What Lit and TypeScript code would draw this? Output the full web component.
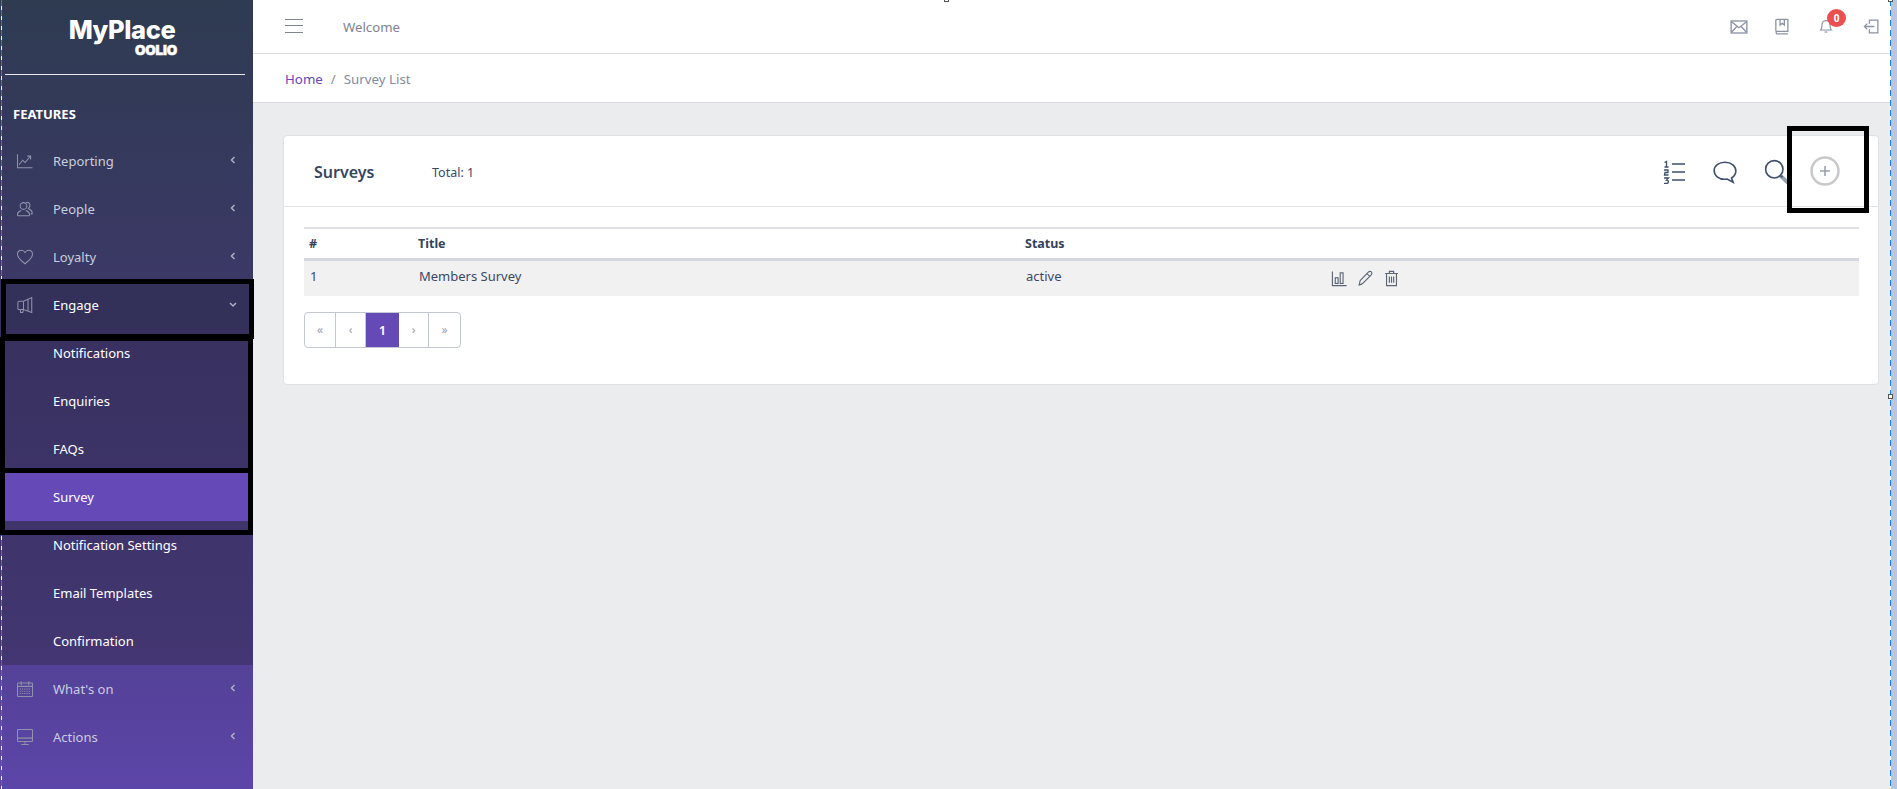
import { LitElement, html, css, svg } from "lit";
import { customElement } from "lit/decorators.js";

const stroke = (body: unknown, size = 20, vb = "0 0 24 24", w = 1.2) => html`<svg class="ico" width=${size} height=${size} viewBox=${vb} fill="none" stroke="currentColor" stroke-width=${w}>${body}</svg>`;

const icons = {
  chart: svg`<path d="M2 3v18h20"/><path d="M4 17l5-6 3 3 7-8"/><path d="M15 5.500h4.500V10"/>`,
  people: svg`<circle cx="10" cy="8" r="4.500"/><path d="M2 21v-2c0-3 3-4 5-5M18 21v-2c0-3-3-4-5-5M2 21h16"/><path d="M13 3.500c3-1.500 6 .5 5.500 4-.2 2-1 3-2 4 2 1 5 2 5 5v2h-2"/>`,
  heart: svg`<path d="M12 21C6 16 2 13 2 8.500 2 5 4.500 3 7 3c2.200 0 4 1.200 5 3 1-1.800 2.800-3 5-3 2.500 0 5 2 5 5.500C22 13 18 16 12 21z"/>`,
  mega: svg`<path d="M21 2v20l-11-4H4a1.500 1.500 0 0 1-1.500-1.500v-8A1.500 1.500 0 0 1 4 7h6z"/><path d="M10 7v11M16 4v16M6 18v4h3l1-4"/>`,
  cal: svg`<rect x="2" y="4" width="20" height="18" rx="1"/><path d="M7 1.500v5M17 1.500v5M2 8.500h20"/><path stroke-dasharray="1.500 1.500" d="M5 12h14M5 15h14M5 18h14"/>`,
  monitor: svg`<rect x="2" y="2" width="20" height="16" rx="1"/><path d="M2 13.500h20M12 18v3M7 22h10"/>`,
};

const parents = [
  ["Reporting", icons.chart],
  ["People", icons.people],
  ["Loyalty", icons.heart],
] as const;
const subs = ["Notifications", "Enquiries", "FAQs", "Survey", "Notification Settings", "Email Templates", "Confirmation"];
const tail = [
  ["What's on", icons.cal],
  ["Actions", icons.monitor],
] as const;

@customElement("app-root")
export class AppRoot extends LitElement {
  static styles = css`
    :host { display: block; width: 1897px; height: 789px; position: relative; overflow: hidden; background: #ebecee;
      font-family: "Noto Sans", "Open Sans", sans-serif; font-size: 13px; color: #3b4a63; }
    * { box-sizing: border-box; }
    .app { display: flex; height: 789px; }
    .side { width: 253px; flex: none; color: #fff; background: linear-gradient(180deg, #2e3b51 0%, #3d3869 40%, #5c45a8 100%); }
    .logo { height: 75px; margin: 0 8px 0 5px; border-bottom: 1px solid #e8e8ee; display: flex; flex-direction: column; align-items: center; padding-top: 15px; }
    .logo b { font: 800 25.500px/29px Inter, "Liberation Sans", sans-serif; letter-spacing: -0.4px; padding-right: 6px; }
    .logo i { font: 900 13.500px/12px Inter, "Liberation Sans", sans-serif; font-style: normal; letter-spacing: -0.2px; align-self: flex-end; margin: 0 68px 0 0; -webkit-text-stroke: 0.5px #fff; }
    .features { font-weight: 700; font-size: 13px; line-height: 18px; margin: 30px 0 14px 13px; height: 18px; }
    .item { display: flex; align-items: center; height: 48px; padding-left: 16px; color: #c9cede; }
    .item .ico { color: #8f93aa; flex: none; }
    .item .ilabel { margin-left: 19px; flex: 1; }
    .item .chev { width: 14px; margin-right: 13px; flex: none; color: #aab0c4; margin-top: -2px; }
    .item.open { color: #fff; background: #33305a; }
    .sub { background: linear-gradient(180deg, #38315f, #433672); }
    .sub a { display: flex; align-items: center; height: 48px; padding-left: 53px; color: #fff; }
    .sub a.on { background: #6549b6; }
    .main { flex: 1; min-width: 0; display: flex; flex-direction: column; }
    .top { height: 54px; background: #fff; border-bottom: 1px solid #dcdde0; display: flex; align-items: center; padding: 0 17px 0 32px; flex: none; }
    .burger { width: 18px; height: 14px; border-top: 1.500px solid #7f8490; border-bottom: 1.500px solid #7f8490; position: relative; margin-top: -1px; }
    .burger::after { content: ""; position: absolute; left: 0; right: 0; top: 4.500px; border-top: 1.500px solid #7f8490; }
    .welcome { margin-left: 40px; color: #7b8494; flex: 1; font-size: 13.200px; }
    .tools { display: flex; align-items: center; color: #8b93a5; }
    .low { margin-top: 4px; }
    .bell { position: relative; display: flex; margin-top: -2px; }
    .badge { position: absolute; top: -9px; left: 9px; width: 19px; height: 18px; border-radius: 50%; background: #e9504f; color: #fff; font-size: 10px; font-weight: 700; line-height: 18px; text-align: center; }
    .crumb { height: 49px; background: #fff; border-bottom: 1px solid #dcdde0; display: flex; align-items: center; padding: 1px 0 0 32px; color: #858c9c; flex: none; font-size: 13.300px; }
    .crumb a { color: #6549b6; }
    .crumb span { margin: 0 8px; }
    .body { padding: 32px 0 0 30px; width: 1638px; }
    .card { width: 1596px; height: 250px; background: #fff; border: 1px solid #dfe1e5; border-radius: 4px; }
    .chead { height: 71px; border-bottom: 1px solid #e3e4e8; display: flex; align-items: center; padding: 2px 0 0 30px; position: relative; }
    .chead h2 { margin: 0; font-size: 16px; font-weight: 600; width: 118px; color: #36455f; }
    .total { flex: 1; font-size: 12.500px; }
    .actions { display: flex; align-items: center; color: #3f4f6c; }
    .table { margin: 20px 19px 0 20px; }
    .row { display: grid; align-items: center; }
    .hd { height: 34px; border-top: 2px solid #dfe1e5; border-bottom: 3px solid #d5d8de; font-weight: 700; font-size: 12.500px; padding-left: 5px; color: #34425c; grid-template-columns: 109px 607px 306px 1fr; }
    .bd { height: 35px; background: #f1f1f1; padding-left: 6px; padding-bottom: 6px; grid-template-columns: 109px 607px 305px 1fr; }
    .rowicons { display: flex; gap: 9px; color: #5b6578; margin-top: 6px; }
    .pager { display: flex; margin: 16px 0 0 20px; width: 157px; height: 36px; border: 1px solid #c4c8d0; border-radius: 4px; overflow: hidden; color: #9aa0ad; font-size: 12px; }
    .pager div { width: 30px; display: flex; align-items: center; justify-content: center; border-right: 1px solid #c4c8d0; padding-bottom: 1px; }
    .pager .first { width: 31px; }
    .pager div:last-child { border-right: 0; width: auto; flex: 1; }
    .pager .cur { background: #6549b6; color: #fff; border-right: 0; margin: -1px 0; width: 33px; font-weight: 600; font-size: 13px; }
    .mark { position: absolute; border: 5px solid #000; pointer-events: none; }
    .m1 { left: 1px; top: 279px; width: 253px; height: 60px; }
    .m2 { left: 0; top: 337px; width: 253px; height: 136px; border-top-width: 4px; }
    .m3 { left: 0; top: 468px; width: 253px; height: 67px; }
    .m4 { left: 1787px; top: 126px; width: 82px; height: 87px; }
    .plus { position: absolute; left: 1810px; top: 156px; color: #9ba1b0; }
    .guide { position: absolute; top: 0; bottom: 0; width: 1px; background: repeating-linear-gradient(180deg, #1e7be0 0 6px, #fff 6px 10px); }
    .g1 { left: 1px; }
    .g2 { left: 1890px; }
    .edge { position: absolute; left: 1891px; top: 0; bottom: 0; width: 6px; background: #b9c7de; }
    .hdl { position: absolute; width: 5px; height: 5px; background: #fff; border: 1px solid #555; }
    .h1 { left: 0; top: 394px; }
    .h2 { left: 1888px; top: 394px; }
    .h3 { left: 1888px; top: -3px; }
    .h4 { left: 944px; top: -3px; }
  `;

  private row(label: string, icon: unknown, open = false) {
    return html`<div class="item ${open ? "open" : ""}">
      ${stroke(icon, 18, "0 0 24 24", 1.4)}
      <span class="ilabel">${label}</span>
      <svg class="chev" width="14" height="14" viewBox="0 0 14 14" fill="none" stroke="currentColor" stroke-width="1.500">
        ${open ? svg`<path d="M4 6l3 3 3-3"/>` : svg`<path d="M8.500 4L5.500 7l3 3"/>`}
      </svg>
    </div>`;
  }

  render() {
    return html`
      <div class="app">
        <aside class="side">
          <div class="logo"><b>MyPlace</b><i>OOLIO</i></div>
          <div class="features">FEATURES</div>
          ${parents.map(([l, i]) => this.row(l, i))}
          ${this.row("Engage", icons.mega, true)}
          <div class="sub">
            ${subs.map((s) => html`<a class=${s === "Survey" ? "on" : ""}>${s}</a>`)}
          </div>
          ${tail.map(([l, i]) => this.row(l, i))}
        </aside>
        <main class="main">
          <header class="top">
            <div class="burger"></div>
            <div class="welcome">Welcome</div>
            <div class="tools">
              <span class="low">${stroke(svg`<rect x="1.500" y="4" width="21" height="16"/><path d="M2 5l10 8 10-8M2 19l7.500-8M22 19l-7.500-8"/>`, 18, "0 0 24 24", 1.800)}</span>
              <span style="width:25px"></span>
              ${stroke(svg`<path d="M4 19V3.500A1.500 1.500 0 0 1 5.500 2H21v17H5.500a2 2 0 0 0 0 3.500H21"/><path d="M10 2v8l3-2.500 3 2.500V2"/>`, 17, "0 0 24 24", 1.800)}
              <span style="width:28px"></span>
              <span class="bell">
                ${stroke(svg`<path d="M4 18c2-2 2-4 2-8 0-3.500 2.500-6 6-6s6 2.500 6 6c0 4 0 6 2 8z"/><path d="M10 21h4"/>`, 16, "0 0 24 24", 1.800)}
                <span class="badge">0</span>
              </span>
              <span style="width:29px"></span>
              ${stroke(svg`<path d="M9 8V3h12v18H9v-5"/><path d="M16 12H2M6 8l-4 4 4 4"/>`, 17, "0 0 24 24", 1.800)}
            </div>
          </header>
          <nav class="crumb"><a>Home</a><span>/</span>Survey List</nav>
          <div class="body">
            <section class="card">
              <div class="chead">
                <h2>Surveys</h2>
                <div class="total">Total: 1</div>
                <div class="actions">
                  ${stroke(svg`<path d="M10 4h13M10 12h13M10 20h13" stroke-width="1.500"/><path d="M2.500 2.500L4.500 1.500V7M2.500 7H6.500M2 10h4v2.500H3L2.500 15H6.500M2 18h4.500L4.500 20c2.500 0 2.500 3.500 0 3.500H2" stroke-width="1.300"/>`, 24, "0 0 24 24", 1.300)}
                  <span style="width:26px"></span>
                  ${stroke(svg`<path d="M12 3c6 0 10 3.500 10 8 0 3-1.500 5-4 6.500l1.500 4-5.500-3c-.7.100-1.300.200-2 .200-6 0-10-3.500-10-8s4-7.700 10-7.700z"/>`, 26, "0 0 24 24", 1.500)}
                  <span style="width:26px"></span>
                  ${stroke(svg`<circle cx="9.500" cy="9.500" r="8"/><path d="M15.500 15.500l6.500 6.500" stroke-width="3.500" stroke="#9aa3b5"/><path d="M15 15l2 2"/>`, 26, "0 0 24 24", 1.500)}
                  <span style="width:88px"></span>
                </div>
              </div>
              <div class="table">
                <div class="row hd"><span>#</span><span>Title</span><span>Status</span><span></span></div>
                <div class="row bd"><span>1</span><span>Members Survey</span><span>active</span>
                  <span class="rowicons">
                    ${stroke(svg`<path d="M2 2v20h20"/><rect x="6" y="11" width="4" height="8"/><rect x="13" y="4" width="4" height="15"/>`, 17, "0 0 24 24", 1.600)}
                    ${stroke(svg`<path d="M3 21l1.500-6L16 3c2-2 5-1 5 1.500 0 1-.5 2-1.500 3L8 19z"/><path d="M14 5l4 4M3 21l4-1"/>`, 17, "0 0 24 24", 1.500)}
                    ${stroke(svg`<path d="M3 5h18M9 5V2h6v3M5 5v17h14V5M9 9v9M12 9v9M15 9v9"/>`, 17, "0 0 24 24", 1.600)}
                  </span>
                </div>
              </div>
              <div class="pager">
                <div class="first">«</div><div>‹</div><div class="cur">1</div><div>›</div><div>»</div>
              </div>
            </section>
          </div>
        </main>
      </div>
      <div class="edge"></div>
      <div class="guide g1"></div>
      <div class="guide g2"></div>
      <div class="hdl h1"></div>
      <div class="hdl h2"></div>
      <div class="hdl h3"></div>
      <div class="hdl h4"></div>
      <div class="mark m1"></div>
      <div class="mark m2"></div>
      <div class="mark m3"></div>
      <div class="mark m4"></div>
      <div class="plus">
        <svg width="30" height="30" viewBox="0 0 30 30" fill="none">
          <circle cx="15" cy="15" r="13.500" stroke="#c9c9c9" stroke-width="2.500"/>
          <path d="M15 10v10M10 15h10" stroke="#9ba1b0" stroke-width="1.600"/>
        </svg>
      </div>
    `;
  }
}
